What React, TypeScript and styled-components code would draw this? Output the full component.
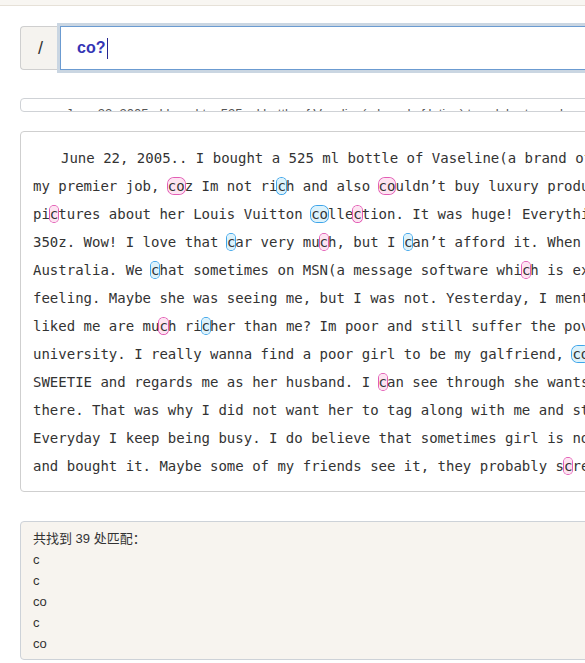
import { Fragment } from "react";
import styled, { createGlobalStyle } from "styled-components";

type Tone = "pink" | "blue";

// {..} = pink match, [..] = blue match
const sourceLines = [
  "June 22, 2005.. I bought a 525 ml bottle of Vaseline(a brand of lotion) to {c}elebrate my bran[c]h",
  "my premier job, {co}z Im not ri[c]h and also {co}uldn’t buy luxury produ[c]ts. My sister sent me some",
  "pi{c}tures about her Louis Vuitton [co]lle{c}tion. It was huge! Everything is expensive. Her boyfriend drives a",
  "350z. Wow! I love that [c]ar very mu{c}h, but I [c]an’t afford it. When I was in {co}llege, I met a girl from",
  "Australia. We [c]hat sometimes on MSN(a message software whi{c}h is extremely [c]ool) and I got a strange",
  "feeling. Maybe she was seeing me, but I was not. Yesterday, I mentioned that why all the girls who",
  "liked me are mu{c}h ri[c]her than me? Im poor and still suffer the poverty sin{c}e I graduated from the",
  "university. I really wanna find a poor girl to be my galfriend, [co]z my girlfriend always calls me",
  "SWEETIE and regards me as her husband. I {c}an see through she wants to get married and settle down",
  "there. That was why I did not want her to tag along with me and stay in my pla[c]e for the whole life.",
  "Everyday I keep being busy. I do believe that sometimes girl is not so important. I went to the shop",
  "and bought it. Maybe some of my friends see it, they probably s{c}ream and laugh at me for a long time.",
];

const hits = ["c", "c", "co", "c", "co"];

type Piece = { text: string; tone?: Tone };

const parseLine = (line: string): Piece[] =>
  line
    .split(/(\{[^}]*\}|\[[^\]]*\])/)
    .filter((s) => s.length > 0)
    .map((s) => {
      if (s.startsWith("{")) return { text: s.slice(1, -1), tone: "pink" as Tone };
      if (s.startsWith("[")) return { text: s.slice(1, -1), tone: "blue" as Tone };
      return { text: s };
    });

const GlobalStyle = createGlobalStyle`
  html, body {
    margin: 0;
    padding: 0;
    overflow: hidden;
    background: #fff;
  }
  body {
    font-family: "Liberation Sans", Arial, sans-serif;
  }
`;

const App = () => {
  return (
    <>
      <GlobalStyle />
      <TopBar />
      <Content>
        <SearchGroup>
          <Prefix>/</Prefix>
          <SearchField role="textbox" aria-label="regex">
            co?
            <Caret />
          </SearchField>
        </SearchGroup>

        <SourceInput>
          <SourcePreview>
            June 22, 2005.. I bought a 525 ml bottle of Vaseline(a brand of lotion) to celebrate my branch
          </SourcePreview>
        </SourceInput>

        <TextPanel>
          {sourceLines.map((line, i) => (
            <TextLine key={i} $indent={i === 0}>
              {parseLine(line).map((p, j) =>
                p.tone ? (
                  <Mark key={j} $tone={p.tone}>
                    {p.text}
                  </Mark>
                ) : (
                  <Fragment key={j}>{p.text}</Fragment>
                )
              )}
            </TextLine>
          ))}
        </TextPanel>

        <ResultPanel>
          <ResultLine>共找到 39 处匹配：</ResultLine>
          {hits.map((h, i) => (
            <ResultLine key={i}>{h}</ResultLine>
          ))}
        </ResultPanel>
      </Content>
    </>
  );
};

export default App;

const TopBar = styled.div`
  height: 5px;
  background-color: #f8f6f2;
  border-bottom: 1px solid #e6e1d8;
`;

const Content = styled.div`
  width: 880px;
  padding: 0 20px;
  display: flex;
  flex-direction: column;
`;

const SearchGroup = styled.div`
  margin-top: 20px;
  height: 44px;
  display: flex;
`;

const Prefix = styled.div`
  width: 40px;
  box-sizing: border-box;
  background-color: #f5f3ef;
  border: 1px solid #cfcfcf;
  border-right: none;
  border-radius: 4px 0 0 4px;
  display: flex;
  align-items: center;
  justify-content: center;
  font-size: 18px;
  color: #333;
`;

const SearchField = styled.div`
  flex: 1;
  box-sizing: border-box;
  background-color: #fff;
  border: 1px solid #6b9bd1;
  box-shadow: 0 0 0 3px #cad6e2;
  padding: 0 16px;
  display: flex;
  align-items: center;
  font-size: 16px;
  font-weight: 700;
  color: #3535b5;
`;

const Caret = styled.span`
  display: inline-block;
  width: 1px;
  height: 21px;
  margin-left: 2px;
  background-color: #25258f;
`;

const SourceInput = styled.div`
  margin-top: 28px;
  height: 14px;
  box-sizing: border-box;
  border: 1px solid #cfd2d6;
  border-radius: 4px;
  overflow: hidden;
`;

const SourcePreview = styled.div`
  padding: 0 13px;
  text-indent: 32px;
  white-space: nowrap;
  font-size: 13px;
  line-height: 29px;
  color: #555;
`;

const TextPanel = styled.div`
  margin-top: 19px;
  padding: 12px 12px 11px;
  border: 1px solid #cfcfcf;
  border-radius: 4px;
  overflow: hidden;
  font-family: "DejaVu Sans Mono", "Liberation Mono", monospace;
  font-size: 14px;
  line-height: 28px;
  color: #333;
`;

const TextLine = styled.div<{ $indent?: boolean }>`
  white-space: pre;
  text-indent: ${({ $indent }) => ($indent ? "28px" : "0")};
`;

const Mark = styled.mark<{ $tone: Tone }>`
  color: inherit;
  border-radius: 6px;
  background-color: ${({ $tone }) => ($tone === "pink" ? "#fde3f1" : "#dcf2fb")};
  box-shadow: 0 0 0 1px
    ${({ $tone }) => ($tone === "pink" ? "#e35db5" : "#3ea5ea")};
`;

const ResultPanel = styled.div`
  margin-top: 29px;
  padding: 6px 12px 5px;
  background-color: #f7f4ef;
  border: 1px solid #cdd2d8;
  border-radius: 4px;
  font-family: "Liberation Sans", "Noto Sans CJK SC", sans-serif;
  font-size: 13px;
  line-height: 21px;
  color: #333;
`;

const ResultLine = styled.div`
  white-space: nowrap;
`;
